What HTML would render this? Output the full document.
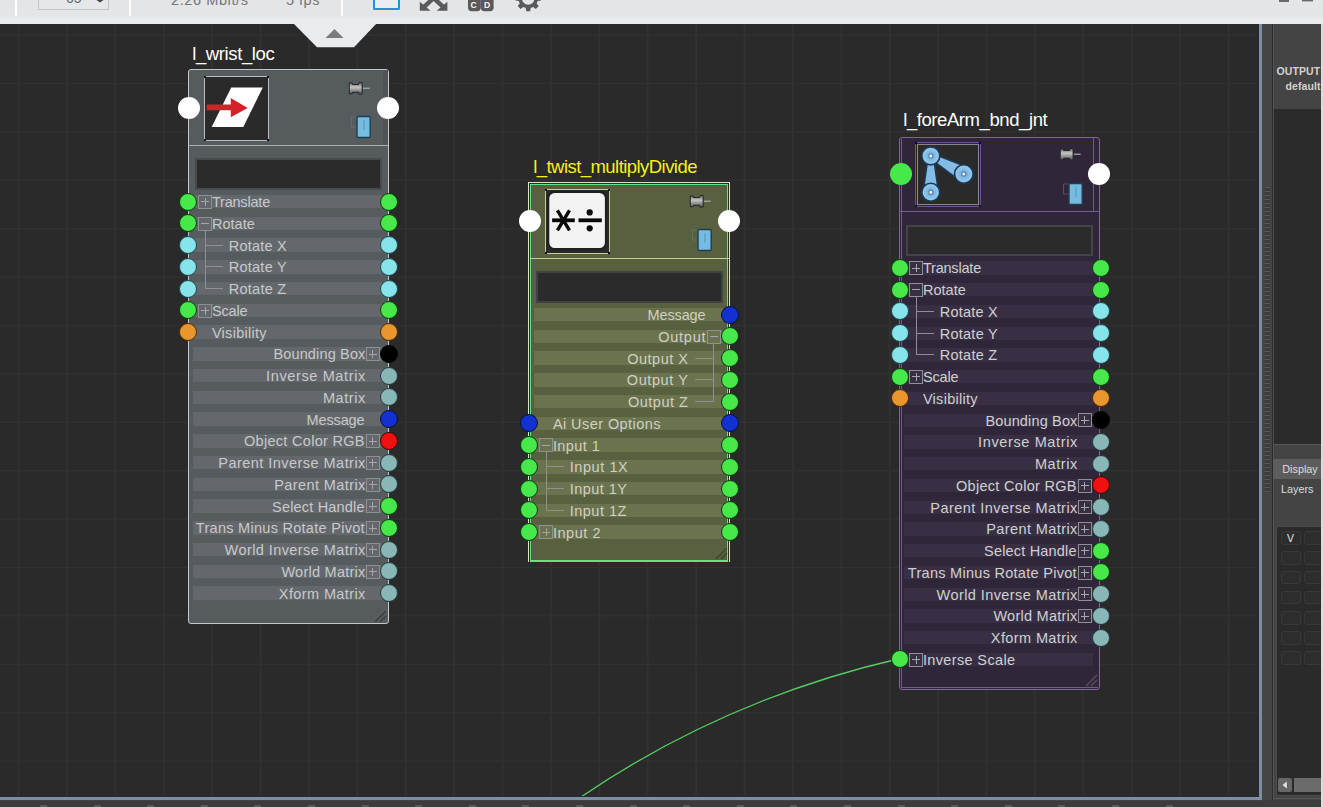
<!DOCTYPE html>
<html><head><meta charset="utf-8"><title>Node Editor</title>
<style>
*{box-sizing:border-box;margin:0;padding:0}
html,body{width:1323px;height:807px;overflow:hidden;background:#2a2a2a}
body{position:relative;font-family:"Liberation Sans", sans-serif;font-size:14.5px;color:#cfcfcf}
.abs{position:absolute}
#canvas{position:absolute;left:0;top:24px;width:1260px;height:774px;background-color:#2a2a2a;overflow:hidden}
#grid{position:absolute;left:0;top:0;width:1260px;height:774px}
.node{position:absolute;width:201px}
.title{position:absolute;white-space:nowrap;font-size:18.5px;line-height:22px}
.strip{position:absolute;height:13.4px}
.lbl{position:absolute;white-space:nowrap;line-height:16px;height:16px}
.port{position:absolute;width:18px;height:18px;border-radius:50%}
.bigport{position:absolute;width:22px;height:22px;border-radius:50%}
.exp{position:absolute;width:14px;height:14px;border:1px solid #8d9193}
.exp:before{content:"";position:absolute;left:2px;right:2px;top:5.5px;height:1px;background:#a4a7a9}
.exp.plus:after{content:"";position:absolute;top:2px;bottom:2px;left:5.5px;width:1px;background:#a4a7a9}
.ln{position:absolute;background:#8d9193}
</style></head>
<body>
<div id="canvas">
<svg id="grid" width="1260" height="774" viewBox="0 0 1260 774"><g fill="#313131"><rect x="17.5" y="0" width="2" height="774"/><rect x="65.9" y="0" width="2" height="774"/><rect x="114.3" y="0" width="2" height="774"/><rect x="162.7" y="0" width="2" height="774"/><rect x="211.1" y="0" width="2" height="774"/><rect x="259.5" y="0" width="2" height="774"/><rect x="307.9" y="0" width="2" height="774"/><rect x="356.3" y="0" width="2" height="774"/><rect x="404.7" y="0" width="2" height="774"/><rect x="453.1" y="0" width="2" height="774"/><rect x="501.5" y="0" width="2" height="774"/><rect x="549.9" y="0" width="2" height="774"/><rect x="598.3" y="0" width="2" height="774"/><rect x="646.7" y="0" width="2" height="774"/><rect x="695.1" y="0" width="2" height="774"/><rect x="743.5" y="0" width="2" height="774"/><rect x="791.9" y="0" width="2" height="774"/><rect x="840.3" y="0" width="2" height="774"/><rect x="888.7" y="0" width="2" height="774"/><rect x="937.1" y="0" width="2" height="774"/><rect x="985.5" y="0" width="2" height="774"/><rect x="1033.9" y="0" width="2" height="774"/><rect x="1082.3" y="0" width="2" height="774"/><rect x="1130.7" y="0" width="2" height="774"/><rect x="1179.1" y="0" width="2" height="774"/><rect x="1227.5" y="0" width="2" height="774"/><rect x="0" y="10.4" width="1260" height="1.4"/><rect x="0" y="58.8" width="1260" height="1.4"/><rect x="0" y="107.2" width="1260" height="1.4"/><rect x="0" y="155.6" width="1260" height="1.4"/><rect x="0" y="204.0" width="1260" height="1.4"/><rect x="0" y="252.4" width="1260" height="1.4"/><rect x="0" y="300.8" width="1260" height="1.4"/><rect x="0" y="349.2" width="1260" height="1.4"/><rect x="0" y="397.6" width="1260" height="1.4"/><rect x="0" y="446.0" width="1260" height="1.4"/><rect x="0" y="494.4" width="1260" height="1.4"/><rect x="0" y="542.8" width="1260" height="1.4"/><rect x="0" y="591.2" width="1260" height="1.4"/><rect x="0" y="639.6" width="1260" height="1.4"/><rect x="0" y="688.0" width="1260" height="1.4"/><rect x="0" y="736.4" width="1260" height="1.4"/></g></svg>
<svg class="abs" style="left:0;top:0" width="1260" height="774" viewBox="0 0 1260 774"><path d="M898 635 C 790 660, 680 705, 578 775" fill="none" stroke="#55d060" stroke-width="1.3"/></svg>
<div class="title" style="left:192.2px;top:18.7px;color:#ffffff;letter-spacing:-0.38px">l_wrist_loc</div>
<div class="node" id="n1" style="left:188px;top:45.0px;height:10px">
<div class="abs" style="left:0;top:0;width:201px;height:555px;background:#565b5e;border:1px solid #c4c7c9;border-radius:3px"></div><div class="abs" style="left:195px;top:1px;width:4.5px;height:75px;background:#4f5457"></div><svg class="abs" style="left:186px;top:541.0px" width="13" height="13" viewBox="0 0 13 13"><path d="M1 12 L12 1 M6 12 L12 6" stroke="#3a3d3f" stroke-width="1.4" fill="none"/></svg>
<div class="abs" style="left:1px;width:199px;top:76px;height:1px;background:#a9adaf"></div>
<svg class="abs" style="left:16px;top:7px" width="65" height="65" viewBox="0 0 65 65">
<rect x="0.5" y="0.5" width="64" height="64" fill="#2a2a2a" stroke="#b9bcbe" stroke-width="1"/>
<rect x="0" y="0" width="2" height="2" fill="#0c0c0c"/><rect x="63" y="0" width="2" height="2" fill="#0c0c0c"/><rect x="0" y="63" width="2" height="2" fill="#0c0c0c"/><rect x="63" y="63" width="2" height="2" fill="#0c0c0c"/>
<path d="M27.2 11.4 L58.8 11.4 L39.3 50.9 L7.7 50.9 Z" fill="#ffffff"/>
<path d="M2.6 28.6 H26.8 V22.1 L43.6 31.9 L26.8 41.2 V34.3 H2.6 Z" fill="#d6202a"/></svg>
<svg class="abs" style="left:160px;top:11.5px" width="24" height="15" viewBox="0 0 24 15">
<defs><linearGradient id="pg" x1="0" y1="0" x2="0" y2="1"><stop offset="0" stop-color="#6c6c6c"/><stop offset="0.4" stop-color="#c4c4c4"/><stop offset="1" stop-color="#5c5c5c"/></linearGradient></defs>
<path d="M1.8 2.4 H3.6 L4.6 4 H10.8 L11.6 2 H13.6 V12.6 H11.6 L10.8 10.8 H4.6 L3.6 12.2 H1.8 Z" fill="url(#pg)" stroke="#232527" stroke-width="2" stroke-linejoin="round" paint-order="stroke"/>
<rect x="14.9" y="6.6" width="6.8" height="1.3" fill="#a4a7a9"/></svg>
<svg class="abs" style="left:159px;top:45px" width="28" height="26" viewBox="0 0 28 26">
<path d="M4.5 3 H10 M4.5 3 V13 H10" stroke="#73797c" stroke-opacity="0.55" stroke-width="1" fill="none"/><rect x="10" y="2.5" width="13.2" height="21" rx="1.3" fill="#76bbe0" stroke="#1f3d50" stroke-width="1.4"/><path d="M17 6 V16" stroke="#5a9cc4" stroke-width="1.2"/></svg>
<div class="abs" style="left:7px;top:89.4px;width:187px;height:31.4px;background:#2b2b2b;border:2.6px solid #484b4e"></div>
<div class="strip" style="left:4.5px;width:189px;top:125.9px;background:#64686c"></div>
<div class="exp plus" style="left:10px;top:125.8px"></div>
<div class="lbl" style="top:125.1px;color:#c8c9ca;letter-spacing:-0.20px;left:23.9px">Translate</div>
<div class="port" style="left:-8.7px;top:123.6px;background:#46e84a;border:1.3px solid #0b3d0d"></div>
<div class="port" style="left:191.8px;top:123.6px;background:#46e84a;border:1.3px solid #0b3d0d"></div>
<div class="strip" style="left:4.5px;width:189px;top:147.7px;background:#64686c"></div>
<div class="exp " style="left:10px;top:147.5px"></div>
<div class="lbl" style="top:146.8px;color:#c8c9ca;letter-spacing:0.05px;left:23.9px">Rotate</div>
<div class="port" style="left:-8.7px;top:145.3px;background:#46e84a;border:1.3px solid #0b3d0d"></div>
<div class="port" style="left:191.8px;top:145.3px;background:#46e84a;border:1.3px solid #0b3d0d"></div>
<div class="strip" style="left:4.5px;width:189px;top:169.4px;background:#64686c"></div>
<div class="lbl" style="top:168.6px;color:#c8c9ca;letter-spacing:0.23px;left:40.7px">Rotate X</div>
<div class="ln" style="left:17px;top:175.6px;width:18px;height:1px"></div>
<div class="port" style="left:-8.7px;top:167.1px;background:#86e4ea;border:1.3px solid #1d4a4d"></div>
<div class="port" style="left:191.8px;top:167.1px;background:#86e4ea;border:1.3px solid #1d4a4d"></div>
<div class="strip" style="left:4.5px;width:189px;top:191.2px;background:#64686c"></div>
<div class="lbl" style="top:190.3px;color:#c8c9ca;letter-spacing:0.26px;left:40.7px">Rotate Y</div>
<div class="ln" style="left:17px;top:197.3px;width:18px;height:1px"></div>
<div class="port" style="left:-8.7px;top:188.8px;background:#86e4ea;border:1.3px solid #1d4a4d"></div>
<div class="port" style="left:191.8px;top:188.8px;background:#86e4ea;border:1.3px solid #1d4a4d"></div>
<div class="strip" style="left:4.5px;width:189px;top:212.9px;background:#64686c"></div>
<div class="lbl" style="top:212.1px;color:#c8c9ca;letter-spacing:0.27px;left:40.7px">Rotate Z</div>
<div class="ln" style="left:17px;top:219.1px;width:18px;height:1px"></div>
<div class="port" style="left:-8.7px;top:210.6px;background:#86e4ea;border:1.3px solid #1d4a4d"></div>
<div class="port" style="left:191.8px;top:210.6px;background:#86e4ea;border:1.3px solid #1d4a4d"></div>
<div class="strip" style="left:4.5px;width:189px;top:234.7px;background:#64686c"></div>
<div class="exp plus" style="left:10px;top:234.5px"></div>
<div class="lbl" style="top:233.8px;color:#c8c9ca;letter-spacing:-0.15px;left:23.9px">Scale</div>
<div class="port" style="left:-8.7px;top:232.3px;background:#46e84a;border:1.3px solid #0b3d0d"></div>
<div class="port" style="left:191.8px;top:232.3px;background:#46e84a;border:1.3px solid #0b3d0d"></div>
<div class="strip" style="left:4.5px;width:189px;top:256.4px;background:#64686c"></div>
<div class="lbl" style="top:255.6px;color:#c8c9ca;letter-spacing:0.29px;left:23.9px">Visibility</div>
<div class="port" style="left:-8.7px;top:254.1px;background:#ea962e;border:1.3px solid #4a2c08"></div>
<div class="port" style="left:191.8px;top:254.1px;background:#ea962e;border:1.3px solid #4a2c08"></div>
<div class="strip" style="left:4.5px;width:189px;top:278.2px;background:#64686c"></div>
<div class="lbl" style="top:277.4px;color:#c8c9ca;letter-spacing:0.15px;right:23.5px">Bounding Box</div>
<div class="exp plus" style="left:177.5px;top:278.1px"></div>
<div class="port" style="left:191.8px;top:275.9px;background:#000000;border:1.3px solid #000000"></div>
<div class="strip" style="left:4.5px;width:189px;top:299.9px;background:#64686c"></div>
<div class="lbl" style="top:299.1px;color:#c8c9ca;letter-spacing:0.63px;right:23.1px">Inverse Matrix</div>
<div class="port" style="left:191.8px;top:297.6px;background:#89b7b8;border:1.3px solid #243b3c"></div>
<div class="strip" style="left:4.5px;width:189px;top:321.7px;background:#64686c"></div>
<div class="lbl" style="top:320.9px;color:#c8c9ca;letter-spacing:0.58px;right:23.1px">Matrix</div>
<div class="port" style="left:191.8px;top:319.4px;background:#89b7b8;border:1.3px solid #243b3c"></div>
<div class="strip" style="left:4.5px;width:189px;top:343.4px;background:#64686c"></div>
<div class="lbl" style="top:342.6px;color:#c8c9ca;letter-spacing:-0.14px;right:24.6px">Message</div>
<div class="port" style="left:191.8px;top:341.1px;background:#1330d0;border:1.3px solid #06103f"></div>
<div class="strip" style="left:4.5px;width:189px;top:365.2px;background:#64686c"></div>
<div class="lbl" style="top:364.4px;color:#c8c9ca;letter-spacing:0.30px;right:24.2px">Object Color RGB</div>
<div class="exp plus" style="left:177.5px;top:365.1px"></div>
<div class="port" style="left:191.8px;top:362.9px;background:#f01010;border:1.3px solid #400404"></div>
<div class="strip" style="left:4.5px;width:189px;top:386.9px;background:#64686c"></div>
<div class="lbl" style="top:386.1px;color:#c8c9ca;letter-spacing:0.46px;right:23.2px">Parent Inverse Matrix</div>
<div class="exp plus" style="left:177.5px;top:386.8px"></div>
<div class="port" style="left:191.8px;top:384.6px;background:#89b7b8;border:1.3px solid #243b3c"></div>
<div class="strip" style="left:4.5px;width:189px;top:408.7px;background:#64686c"></div>
<div class="lbl" style="top:407.9px;color:#c8c9ca;letter-spacing:0.40px;right:23.3px">Parent Matrix</div>
<div class="exp plus" style="left:177.5px;top:408.6px"></div>
<div class="port" style="left:191.8px;top:406.4px;background:#89b7b8;border:1.3px solid #243b3c"></div>
<div class="strip" style="left:4.5px;width:189px;top:430.4px;background:#64686c"></div>
<div class="lbl" style="top:429.6px;color:#c8c9ca;letter-spacing:0.18px;right:24.3px">Select Handle</div>
<div class="exp plus" style="left:177.5px;top:430.3px"></div>
<div class="port" style="left:191.8px;top:428.1px;background:#46e84a;border:1.3px solid #0b3d0d"></div>
<div class="strip" style="left:4.5px;width:189px;top:452.2px;background:#64686c"></div>
<div class="lbl" style="top:451.4px;color:#c8c9ca;letter-spacing:0.28px;right:24.2px">Trans Minus Rotate Pivot</div>
<div class="exp plus" style="left:177.5px;top:452.1px"></div>
<div class="port" style="left:191.8px;top:449.9px;background:#46e84a;border:1.3px solid #0b3d0d"></div>
<div class="strip" style="left:4.5px;width:189px;top:473.9px;background:#64686c"></div>
<div class="lbl" style="top:473.1px;color:#c8c9ca;letter-spacing:0.42px;right:23.3px">World Inverse Matrix</div>
<div class="exp plus" style="left:177.5px;top:473.8px"></div>
<div class="port" style="left:191.8px;top:471.6px;background:#89b7b8;border:1.3px solid #243b3c"></div>
<div class="strip" style="left:4.5px;width:189px;top:495.7px;background:#64686c"></div>
<div class="lbl" style="top:494.9px;color:#c8c9ca;letter-spacing:0.26px;right:23.4px">World Matrix</div>
<div class="exp plus" style="left:177.5px;top:495.6px"></div>
<div class="port" style="left:191.8px;top:493.4px;background:#89b7b8;border:1.3px solid #243b3c"></div>
<div class="strip" style="left:4.5px;width:189px;top:517.4px;background:#64686c"></div>
<div class="lbl" style="top:516.6px;color:#c8c9ca;letter-spacing:0.39px;right:23.3px">Xform Matrix</div>
<div class="port" style="left:191.8px;top:515.1px;background:#89b7b8;border:1.3px solid #243b3c"></div>
<div class="ln" style="left:17.0px;top:161.3px;width:1px;height:58.8px"></div>
<div class="bigport" style="left:-9.7px;top:28.3px;background:#ffffff"></div>
<div class="bigport" style="left:188.8px;top:28.3px;background:#ffffff"></div>
</div>
<div class="title" style="left:533.2px;top:131.7px;color:#f4f01a;letter-spacing:-0.55px">l_twist_multiplyDivide</div>
<div class="node" id="n2" style="left:529px;top:158.0px;height:10px">
<div class="abs" style="left:-1px;top:0;width:202px;height:380px;background:#2a2a2a;border:1px solid #dfe6bd;border-bottom:none"></div><div class="abs" style="left:1.3px;top:2.3px;width:197.7px;height:377.7px;background:#58613f;border:1.7px solid #5fe487;border-bottom-width:2.2px;border-top-width:1.4px"></div><svg class="abs" style="left:186px;top:365.0px" width="13" height="13" viewBox="0 0 13 13"><path d="M1 12 L12 1 M6 12 L12 6" stroke="#3f432f" stroke-width="1.4" fill="none"/></svg>
<div class="abs" style="left:1px;width:199px;top:76px;height:1px;background:#c9cf86"></div>
<svg class="abs" style="left:16px;top:7px" width="65" height="65" viewBox="0 0 65 65">
<rect x="0.5" y="0.5" width="64" height="64" fill="#2a2a2a" stroke="#c9cf9a" stroke-width="1"/>
<rect x="0" y="0" width="2" height="2" fill="#0c0c0c"/><rect x="63" y="0" width="2" height="2" fill="#0c0c0c"/><rect x="0" y="63" width="2" height="2" fill="#0c0c0c"/><rect x="63" y="63" width="2" height="2" fill="#0c0c0c"/>
<rect x="3.2" y="2.8" width="57.8" height="57.4" rx="6.5" fill="#f3f3f3" stroke="#1e2023" stroke-width="2.2"/>
<g stroke="#080808" stroke-linecap="butt" fill="none"><path d="M7.1 31.3 H29.8" stroke-width="3.8"/><path d="M12.4 21.3 L24.5 41.3 M24.5 21.3 L12.4 41.3" stroke-width="3.4"/></g>
<rect x="33.5" y="29.4" width="23.3" height="3.8" fill="#080808"/><circle cx="44.7" cy="23.4" r="3.1" fill="#080808"/><circle cx="44.7" cy="39.3" r="3.1" fill="#080808"/></svg>
<svg class="abs" style="left:160px;top:11.5px" width="24" height="15" viewBox="0 0 24 15">
<defs><linearGradient id="pg" x1="0" y1="0" x2="0" y2="1"><stop offset="0" stop-color="#6c6c6c"/><stop offset="0.4" stop-color="#c4c4c4"/><stop offset="1" stop-color="#5c5c5c"/></linearGradient></defs>
<path d="M1.8 2.4 H3.6 L4.6 4 H10.8 L11.6 2 H13.6 V12.6 H11.6 L10.8 10.8 H4.6 L3.6 12.2 H1.8 Z" fill="url(#pg)" stroke="#232527" stroke-width="2" stroke-linejoin="round" paint-order="stroke"/>
<rect x="14.9" y="6.6" width="6.8" height="1.3" fill="#a4a7a9"/></svg>
<svg class="abs" style="left:159px;top:45px" width="28" height="26" viewBox="0 0 28 26">
<path d="M4.5 3 H10 M4.5 3 V13 H10" stroke="#73797c" stroke-opacity="0.55" stroke-width="1" fill="none"/><rect x="10" y="2.5" width="13.2" height="21" rx="1.3" fill="#76bbe0" stroke="#1f3d50" stroke-width="1.4"/><path d="M17 6 V16" stroke="#5a9cc4" stroke-width="1.2"/></svg>
<div class="abs" style="left:7px;top:89.4px;width:187px;height:31.4px;background:#2b2b2b;border:2.6px solid #414342"></div>
<div class="strip" style="left:4.5px;width:189px;top:125.9px;background:#6a734e"></div>
<div class="lbl" style="top:125.1px;color:#cfd0c2;letter-spacing:-0.14px;right:24.6px">Message</div>
<div class="port" style="left:191.8px;top:123.6px;background:#1330d0;border:1.3px solid #06103f"></div>
<div class="strip" style="left:4.5px;width:189px;top:147.7px;background:#6a734e"></div>
<div class="lbl" style="top:146.8px;color:#cfd0c2;letter-spacing:0.77px;right:23.7px">Output</div>
<div class="exp " style="left:177.5px;top:147.5px"></div>
<div class="port" style="left:191.8px;top:145.3px;background:#46e84a;border:1.3px solid #0b3d0d"></div>
<div class="strip" style="left:4.5px;width:189px;top:169.4px;background:#6a734e"></div>
<div class="lbl" style="top:168.6px;color:#cfd0c2;letter-spacing:0.47px;right:41.7px">Output X</div>
<div class="ln" style="left:166px;top:175.6px;width:18.5px;height:1px"></div>
<div class="port" style="left:191.8px;top:167.1px;background:#46e84a;border:1.3px solid #0b3d0d"></div>
<div class="strip" style="left:4.5px;width:189px;top:191.2px;background:#6a734e"></div>
<div class="lbl" style="top:190.3px;color:#cfd0c2;letter-spacing:0.58px;right:41.6px">Output Y</div>
<div class="ln" style="left:166px;top:197.3px;width:18.5px;height:1px"></div>
<div class="port" style="left:191.8px;top:188.8px;background:#46e84a;border:1.3px solid #0b3d0d"></div>
<div class="strip" style="left:4.5px;width:189px;top:212.9px;background:#6a734e"></div>
<div class="lbl" style="top:212.1px;color:#cfd0c2;letter-spacing:0.48px;right:41.7px">Output Z</div>
<div class="ln" style="left:166px;top:219.1px;width:18.5px;height:1px"></div>
<div class="port" style="left:191.8px;top:210.6px;background:#46e84a;border:1.3px solid #0b3d0d"></div>
<div class="strip" style="left:4.5px;width:189px;top:234.7px;background:#6a734e"></div>
<div class="lbl" style="top:233.8px;color:#cfd0c2;letter-spacing:0.43px;left:23.9px">Ai User Options</div>
<div class="port" style="left:-8.7px;top:232.3px;background:#1330d0;border:1.3px solid #06103f"></div>
<div class="port" style="left:191.8px;top:232.3px;background:#1330d0;border:1.3px solid #06103f"></div>
<div class="strip" style="left:4.5px;width:189px;top:256.4px;background:#6a734e"></div>
<div class="exp " style="left:10px;top:256.3px"></div>
<div class="lbl" style="top:255.6px;color:#cfd0c2;letter-spacing:0.43px;left:23.9px">Input 1</div>
<div class="port" style="left:-8.7px;top:254.1px;background:#46e84a;border:1.3px solid #0b3d0d"></div>
<div class="port" style="left:191.8px;top:254.1px;background:#46e84a;border:1.3px solid #0b3d0d"></div>
<div class="strip" style="left:4.5px;width:189px;top:278.2px;background:#6a734e"></div>
<div class="lbl" style="top:277.4px;color:#cfd0c2;letter-spacing:0.57px;left:40.7px">Input 1X</div>
<div class="ln" style="left:17px;top:284.4px;width:18px;height:1px"></div>
<div class="port" style="left:-8.7px;top:275.9px;background:#46e84a;border:1.3px solid #0b3d0d"></div>
<div class="port" style="left:191.8px;top:275.9px;background:#46e84a;border:1.3px solid #0b3d0d"></div>
<div class="strip" style="left:4.5px;width:189px;top:299.9px;background:#6a734e"></div>
<div class="lbl" style="top:299.1px;color:#cfd0c2;letter-spacing:0.47px;left:40.7px">Input 1Y</div>
<div class="ln" style="left:17px;top:306.1px;width:18px;height:1px"></div>
<div class="port" style="left:-8.7px;top:297.6px;background:#46e84a;border:1.3px solid #0b3d0d"></div>
<div class="port" style="left:191.8px;top:297.6px;background:#46e84a;border:1.3px solid #0b3d0d"></div>
<div class="strip" style="left:4.5px;width:189px;top:321.7px;background:#6a734e"></div>
<div class="lbl" style="top:320.9px;color:#cfd0c2;letter-spacing:0.51px;left:40.7px">Input 1Z</div>
<div class="ln" style="left:17px;top:327.9px;width:18px;height:1px"></div>
<div class="port" style="left:-8.7px;top:319.4px;background:#46e84a;border:1.3px solid #0b3d0d"></div>
<div class="port" style="left:191.8px;top:319.4px;background:#46e84a;border:1.3px solid #0b3d0d"></div>
<div class="strip" style="left:4.5px;width:189px;top:343.4px;background:#6a734e"></div>
<div class="exp plus" style="left:10px;top:343.3px"></div>
<div class="lbl" style="top:342.6px;color:#cfd0c2;letter-spacing:0.54px;left:23.9px">Input 2</div>
<div class="port" style="left:-8.7px;top:341.1px;background:#46e84a;border:1.3px solid #0b3d0d"></div>
<div class="port" style="left:191.8px;top:341.1px;background:#46e84a;border:1.3px solid #0b3d0d"></div>
<div class="ln" style="left:184.0px;top:161.3px;width:1px;height:58.8px"></div>
<div class="ln" style="left:17.0px;top:270.1px;width:1px;height:58.8px"></div>
<div class="bigport" style="left:-9.7px;top:27.7px;background:#ffffff"></div>
<div class="bigport" style="left:188.8px;top:27.7px;background:#ffffff"></div>
</div>
<div class="title" style="left:903.2px;top:85.1px;color:#ffffff;letter-spacing:-0.42px">l_foreArm_bnd_jnt</div>
<div class="node" id="n3" style="left:899px;top:111.4px;height:10px">
<div class="abs" style="left:0;top:2px;width:201px;height:553px;background:#2f2639;border:1.5px solid #8163a0;border-radius:3px"></div><div class="abs" style="left:2px;top:4px;width:197px;height:549px;border:1px solid #6e6278;border-right:none;border-top:none"></div><div class="abs" style="left:194px;top:3px;width:1px;height:73px;background:#6a5f73"></div><svg class="abs" style="left:186px;top:539.0px" width="13" height="13" viewBox="0 0 13 13"><path d="M1 12 L12 1 M6 12 L12 6" stroke="#5b5060" stroke-width="1.4" fill="none"/></svg>
<div class="abs" style="left:1px;width:199px;top:76px;height:1px;background:#7a5a96"></div>
<svg class="abs" style="left:16px;top:7px" width="66" height="65" viewBox="0 0 66 65">
<rect x="0.5" y="0.5" width="65" height="64" fill="#2a2a2a" stroke="#6f4f8f" stroke-width="1"/>
<rect x="2.5" y="2.5" width="61" height="60" fill="none" stroke="#8a838d" stroke-width="1"/>
<rect x="0" y="0" width="2" height="2" fill="#0c0c14"/><rect x="64" y="0" width="2" height="2" fill="#0c0c14"/><rect x="0" y="63" width="2" height="2" fill="#0c0c14"/><rect x="64" y="63" width="2" height="2" fill="#0c0c14"/>
<defs><radialGradient id="jg" cx="0.5" cy="0.5" r="0.5"><stop offset="0" stop-color="#6fa9d8"/><stop offset="0.45" stop-color="#7fb8e3"/><stop offset="0.8" stop-color="#93c8ee"/><stop offset="1" stop-color="#7db4df"/></radialGradient></defs>
<g stroke="#1d3a55" stroke-width="1.6" stroke-linejoin="round">
<path d="M12.2 20.9 L9.0 43.9 L22.6 43.9 L19.4 20.9 Z" fill="#84bce6"/><path d="M20.2 20.4 L39.7 34.8 L46.3 22.8 L23.7 14.1 Z" fill="#84bce6"/>
<circle cx="15.8" cy="13.9" r="9.0" fill="url(#jg)"/><circle cx="48.8" cy="32.0" r="9.3" fill="url(#jg)"/><circle cx="15.8" cy="50.3" r="9.0" fill="url(#jg)"/>
</g>
<g fill="#f0f2f5" stroke="#5585b0" stroke-width="1.2"><circle cx="15.8" cy="13.9" r="2.1"/><circle cx="48.8" cy="32.0" r="2.1"/><circle cx="15.8" cy="50.3" r="2.1"/></g>
</svg>
<svg class="abs" style="left:160px;top:11.5px" width="24" height="15" viewBox="0 0 24 15">
<defs><linearGradient id="pg" x1="0" y1="0" x2="0" y2="1"><stop offset="0" stop-color="#6c6c6c"/><stop offset="0.4" stop-color="#c4c4c4"/><stop offset="1" stop-color="#5c5c5c"/></linearGradient></defs>
<path d="M1.8 2.4 H3.6 L4.6 4 H10.8 L11.6 2 H13.6 V12.6 H11.6 L10.8 10.8 H4.6 L3.6 12.2 H1.8 Z" fill="url(#pg)" stroke="#232527" stroke-width="2" stroke-linejoin="round" paint-order="stroke"/>
<rect x="14.9" y="6.6" width="6.8" height="1.3" fill="#a4a7a9"/></svg>
<svg class="abs" style="left:160.2px;top:45.8px" width="28" height="26" viewBox="0 0 28 26">
<path d="M4.5 3 H10 M4.5 3 V13 H10" stroke="#73797c" stroke-opacity="0.55" stroke-width="1" fill="none"/><rect x="10" y="2.5" width="13.2" height="21" rx="1.3" fill="#76bbe0" stroke="#1f3d50" stroke-width="1.4"/><path d="M17 6 V16" stroke="#5a9cc4" stroke-width="1.2"/></svg>
<div class="abs" style="left:7px;top:89.4px;width:187px;height:31.4px;background:#2b2b2b;border:2.6px solid #45424a"></div>
<div class="strip" style="left:4.5px;width:189px;top:125.9px;background:#392f44"></div>
<div class="exp plus" style="left:10px;top:125.8px"></div>
<div class="lbl" style="top:125.1px;color:#cfcfd0;letter-spacing:-0.20px;left:23.9px">Translate</div>
<div class="port" style="left:-8.0px;top:123.6px;background:#46e84a;border:1.3px solid #0b3d0d"></div>
<div class="port" style="left:192.5px;top:123.6px;background:#46e84a;border:1.3px solid #0b3d0d"></div>
<div class="strip" style="left:4.5px;width:189px;top:147.7px;background:#392f44"></div>
<div class="exp " style="left:10px;top:147.5px"></div>
<div class="lbl" style="top:146.8px;color:#cfcfd0;letter-spacing:0.05px;left:23.9px">Rotate</div>
<div class="port" style="left:-8.0px;top:145.3px;background:#46e84a;border:1.3px solid #0b3d0d"></div>
<div class="port" style="left:192.5px;top:145.3px;background:#46e84a;border:1.3px solid #0b3d0d"></div>
<div class="strip" style="left:4.5px;width:189px;top:169.4px;background:#392f44"></div>
<div class="lbl" style="top:168.6px;color:#cfcfd0;letter-spacing:0.23px;left:40.7px">Rotate X</div>
<div class="ln" style="left:17px;top:175.6px;width:18px;height:1px"></div>
<div class="port" style="left:-8.0px;top:167.1px;background:#86e4ea;border:1.3px solid #1d4a4d"></div>
<div class="port" style="left:192.5px;top:167.1px;background:#86e4ea;border:1.3px solid #1d4a4d"></div>
<div class="strip" style="left:4.5px;width:189px;top:191.2px;background:#392f44"></div>
<div class="lbl" style="top:190.3px;color:#cfcfd0;letter-spacing:0.26px;left:40.7px">Rotate Y</div>
<div class="ln" style="left:17px;top:197.3px;width:18px;height:1px"></div>
<div class="port" style="left:-8.0px;top:188.8px;background:#86e4ea;border:1.3px solid #1d4a4d"></div>
<div class="port" style="left:192.5px;top:188.8px;background:#86e4ea;border:1.3px solid #1d4a4d"></div>
<div class="strip" style="left:4.5px;width:189px;top:212.9px;background:#392f44"></div>
<div class="lbl" style="top:212.1px;color:#cfcfd0;letter-spacing:0.27px;left:40.7px">Rotate Z</div>
<div class="ln" style="left:17px;top:219.1px;width:18px;height:1px"></div>
<div class="port" style="left:-8.0px;top:210.6px;background:#86e4ea;border:1.3px solid #1d4a4d"></div>
<div class="port" style="left:192.5px;top:210.6px;background:#86e4ea;border:1.3px solid #1d4a4d"></div>
<div class="strip" style="left:4.5px;width:189px;top:234.7px;background:#392f44"></div>
<div class="exp plus" style="left:10px;top:234.5px"></div>
<div class="lbl" style="top:233.8px;color:#cfcfd0;letter-spacing:-0.15px;left:23.9px">Scale</div>
<div class="port" style="left:-8.0px;top:232.3px;background:#46e84a;border:1.3px solid #0b3d0d"></div>
<div class="port" style="left:192.5px;top:232.3px;background:#46e84a;border:1.3px solid #0b3d0d"></div>
<div class="strip" style="left:4.5px;width:189px;top:256.4px;background:#392f44"></div>
<div class="lbl" style="top:255.6px;color:#cfcfd0;letter-spacing:0.29px;left:23.9px">Visibility</div>
<div class="port" style="left:-8.0px;top:254.1px;background:#ea962e;border:1.3px solid #4a2c08"></div>
<div class="port" style="left:192.5px;top:254.1px;background:#ea962e;border:1.3px solid #4a2c08"></div>
<div class="strip" style="left:4.5px;width:189px;top:278.2px;background:#392f44"></div>
<div class="lbl" style="top:277.4px;color:#cfcfd0;letter-spacing:0.15px;right:22.5px">Bounding Box</div>
<div class="exp plus" style="left:178.5px;top:278.1px"></div>
<div class="port" style="left:192.5px;top:275.9px;background:#000000;border:1.3px solid #000000"></div>
<div class="strip" style="left:4.5px;width:189px;top:299.9px;background:#392f44"></div>
<div class="lbl" style="top:299.1px;color:#cfcfd0;letter-spacing:0.63px;right:22.1px">Inverse Matrix</div>
<div class="port" style="left:192.5px;top:297.6px;background:#89b7b8;border:1.3px solid #243b3c"></div>
<div class="strip" style="left:4.5px;width:189px;top:321.7px;background:#392f44"></div>
<div class="lbl" style="top:320.9px;color:#cfcfd0;letter-spacing:0.58px;right:22.1px">Matrix</div>
<div class="port" style="left:192.5px;top:319.4px;background:#89b7b8;border:1.3px solid #243b3c"></div>
<div class="strip" style="left:4.5px;width:189px;top:343.4px;background:#392f44"></div>
<div class="lbl" style="top:342.6px;color:#cfcfd0;letter-spacing:0.30px;right:23.2px">Object Color RGB</div>
<div class="exp plus" style="left:178.5px;top:343.3px"></div>
<div class="port" style="left:192.5px;top:341.1px;background:#f01010;border:1.3px solid #400404"></div>
<div class="strip" style="left:4.5px;width:189px;top:365.2px;background:#392f44"></div>
<div class="lbl" style="top:364.4px;color:#cfcfd0;letter-spacing:0.46px;right:22.2px">Parent Inverse Matrix</div>
<div class="exp plus" style="left:178.5px;top:365.1px"></div>
<div class="port" style="left:192.5px;top:362.9px;background:#89b7b8;border:1.3px solid #243b3c"></div>
<div class="strip" style="left:4.5px;width:189px;top:386.9px;background:#392f44"></div>
<div class="lbl" style="top:386.1px;color:#cfcfd0;letter-spacing:0.40px;right:22.3px">Parent Matrix</div>
<div class="exp plus" style="left:178.5px;top:386.8px"></div>
<div class="port" style="left:192.5px;top:384.6px;background:#89b7b8;border:1.3px solid #243b3c"></div>
<div class="strip" style="left:4.5px;width:189px;top:408.7px;background:#392f44"></div>
<div class="lbl" style="top:407.9px;color:#cfcfd0;letter-spacing:0.18px;right:23.3px">Select Handle</div>
<div class="exp plus" style="left:178.5px;top:408.6px"></div>
<div class="port" style="left:192.5px;top:406.4px;background:#46e84a;border:1.3px solid #0b3d0d"></div>
<div class="strip" style="left:4.5px;width:189px;top:430.4px;background:#392f44"></div>
<div class="lbl" style="top:429.6px;color:#cfcfd0;letter-spacing:0.28px;right:23.2px">Trans Minus Rotate Pivot</div>
<div class="exp plus" style="left:178.5px;top:430.3px"></div>
<div class="port" style="left:192.5px;top:428.1px;background:#46e84a;border:1.3px solid #0b3d0d"></div>
<div class="strip" style="left:4.5px;width:189px;top:452.2px;background:#392f44"></div>
<div class="lbl" style="top:451.4px;color:#cfcfd0;letter-spacing:0.42px;right:22.3px">World Inverse Matrix</div>
<div class="exp plus" style="left:178.5px;top:452.1px"></div>
<div class="port" style="left:192.5px;top:449.9px;background:#89b7b8;border:1.3px solid #243b3c"></div>
<div class="strip" style="left:4.5px;width:189px;top:473.9px;background:#392f44"></div>
<div class="lbl" style="top:473.1px;color:#cfcfd0;letter-spacing:0.26px;right:22.4px">World Matrix</div>
<div class="exp plus" style="left:178.5px;top:473.8px"></div>
<div class="port" style="left:192.5px;top:471.6px;background:#89b7b8;border:1.3px solid #243b3c"></div>
<div class="strip" style="left:4.5px;width:189px;top:495.7px;background:#392f44"></div>
<div class="lbl" style="top:494.9px;color:#cfcfd0;letter-spacing:0.39px;right:22.3px">Xform Matrix</div>
<div class="port" style="left:192.5px;top:493.4px;background:#89b7b8;border:1.3px solid #243b3c"></div>
<div class="strip" style="left:4.5px;width:189px;top:517.4px;background:#392f44"></div>
<div class="exp plus" style="left:10px;top:517.3px"></div>
<div class="lbl" style="top:516.6px;color:#cfcfd0;letter-spacing:0.36px;left:23.9px">Inverse Scale</div>
<div class="port" style="left:-8.0px;top:515.1px;background:#46e84a;border:1.3px solid #0b3d0d"></div>
<div class="ln" style="left:17.0px;top:161.3px;width:1px;height:58.8px"></div>
<div class="bigport" style="left:-9.5px;top:27.5px;background:#46e84a"></div>
<div class="bigport" style="left:189.0px;top:27.5px;background:#ffffff"></div>
</div>
</div>
<div class="abs" style="left:0;top:795.5px;width:1259px;height:1.5px;background:#222b35"></div><div class="abs" style="left:1257.5px;top:24px;width:1.5px;height:773px;background:#222b35"></div>
<div class="abs" style="left:0;top:797px;width:1262px;height:3px;background:#7e8fa2"></div>
<div class="abs" style="left:1259px;top:24px;width:3px;height:776px;background:#7e8fa2"></div>
<div class="abs" style="left:0;top:800px;width:1262px;height:7px;background:#3b3b3b;border-top:1px solid #424242"></div>
<div class="abs" style="left:40.0px;top:805.4px;width:7px;height:1.6px;background:#7a7a7a;opacity:.5"></div><div class="abs" style="left:93.6px;top:805.4px;width:7px;height:1.6px;background:#7a7a7a;opacity:.5"></div><div class="abs" style="left:147.2px;top:805.4px;width:7px;height:1.6px;background:#7a7a7a;opacity:.5"></div><div class="abs" style="left:200.8px;top:805.4px;width:7px;height:1.6px;background:#7a7a7a;opacity:.5"></div><div class="abs" style="left:254.4px;top:805.4px;width:7px;height:1.6px;background:#7a7a7a;opacity:.5"></div><div class="abs" style="left:308.0px;top:805.4px;width:7px;height:1.6px;background:#7a7a7a;opacity:.5"></div><div class="abs" style="left:361.6px;top:805.4px;width:7px;height:1.6px;background:#7a7a7a;opacity:.5"></div><div class="abs" style="left:415.2px;top:805.4px;width:7px;height:1.6px;background:#7a7a7a;opacity:.5"></div><div class="abs" style="left:468.8px;top:805.4px;width:7px;height:1.6px;background:#7a7a7a;opacity:.5"></div><div class="abs" style="left:522.4px;top:805.4px;width:7px;height:1.6px;background:#7a7a7a;opacity:.5"></div><div class="abs" style="left:576.0px;top:805.4px;width:7px;height:1.6px;background:#7a7a7a;opacity:.5"></div><div class="abs" style="left:629.6px;top:805.4px;width:7px;height:1.6px;background:#7a7a7a;opacity:.5"></div><div class="abs" style="left:683.2px;top:805.4px;width:7px;height:1.6px;background:#7a7a7a;opacity:.5"></div><div class="abs" style="left:736.8px;top:805.4px;width:7px;height:1.6px;background:#7a7a7a;opacity:.5"></div><div class="abs" style="left:790.4px;top:805.4px;width:7px;height:1.6px;background:#7a7a7a;opacity:.5"></div><div class="abs" style="left:844.0px;top:805.4px;width:7px;height:1.6px;background:#7a7a7a;opacity:.5"></div><div class="abs" style="left:897.6px;top:805.4px;width:7px;height:1.6px;background:#7a7a7a;opacity:.5"></div><div class="abs" style="left:951.2px;top:805.4px;width:7px;height:1.6px;background:#7a7a7a;opacity:.5"></div><div class="abs" style="left:1004.8px;top:805.4px;width:7px;height:1.6px;background:#7a7a7a;opacity:.5"></div><div class="abs" style="left:1058.4px;top:805.4px;width:7px;height:1.6px;background:#7a7a7a;opacity:.5"></div><div class="abs" style="left:1112.0px;top:805.4px;width:7px;height:1.6px;background:#7a7a7a;opacity:.5"></div><div class="abs" style="left:1165.6px;top:805.4px;width:7px;height:1.6px;background:#7a7a7a;opacity:.5"></div>
<div class="abs" id="rp" style="left:1262px;top:24px;width:61px;height:783px;background:#444444;overflow:hidden;font-size:10.5px">
<div class="abs" style="left:0;top:0;width:10px;height:783px;background:#454545"></div>
<div class="abs" style="left:3px;top:163px;width:5px;height:306px;background:repeating-linear-gradient(#585858 0 1.5px,#3c3c3c 1.5px 4px)"></div>
<div class="abs" style="left:9.5px;top:0;width:1.5px;height:783px;background:#2c2c2c"></div>
<div class="abs" style="left:11px;top:0;width:1px;height:783px;background:#555"></div>
<div class="abs" style="left:12px;top:0;width:47px;height:85px;background:#444"></div>
<div class="abs" style="left:14.5px;top:39.5px;white-space:nowrap;font-weight:bold;color:#d4d2cf;font-size:10.5px;line-height:15px;letter-spacing:0.1px">OUTPUT<br><span style="padding-left:9px">default</span></div>
<div class="abs" style="left:11px;top:85px;width:50px;height:336px;background:#2b2b2b;border-left:1px solid #4e4e4e;border-bottom:1px solid #5a5a5a"></div>
<div class="abs" style="left:10.5px;top:435px;width:50px;height:20px;background:#5d5d5d"></div>
<div class="abs" style="left:20.3px;top:437.5px;color:#dedede;font-size:10.8px;line-height:15px;white-space:nowrap">Display</div>
<div class="abs" style="left:19px;top:457.5px;color:#dedede;font-size:10.8px;line-height:15px;white-space:nowrap">Layers</div>
<div class="abs" style="left:13.5px;top:501.5px;width:50px;height:270px;background:#2a2a2a;border:1px solid #4c4c4c;border-radius:3px"></div><div class="abs" style="left:11px;top:773.5px;width:50px;height:1px;background:#565656"></div><div class="abs" style="left:0;top:776px;width:61px;height:7px;background:#3d3d3d"></div>
<div class="abs" style="left:18.5px;top:507.0px;width:20.5px;height:13.5px;background:#2d2d2d;border:1px solid #393939;border-radius:3px"></div>
<div class="abs" style="left:42.0px;top:507.0px;width:20.5px;height:13.5px;background:#2d2d2d;border:1px solid #393939;border-radius:3px"></div>
<div class="abs" style="left:18.5px;top:527.0px;width:20.5px;height:13.5px;background:#2d2d2d;border:1px solid #393939;border-radius:3px"></div>
<div class="abs" style="left:42.0px;top:527.0px;width:20.5px;height:13.5px;background:#2d2d2d;border:1px solid #393939;border-radius:3px"></div>
<div class="abs" style="left:18.5px;top:546.8px;width:20.5px;height:13.5px;background:#2d2d2d;border:1px solid #393939;border-radius:3px"></div>
<div class="abs" style="left:42.0px;top:546.8px;width:20.5px;height:13.5px;background:#2d2d2d;border:1px solid #393939;border-radius:3px"></div>
<div class="abs" style="left:18.5px;top:566.7px;width:20.5px;height:13.5px;background:#2d2d2d;border:1px solid #393939;border-radius:3px"></div>
<div class="abs" style="left:42.0px;top:566.7px;width:20.5px;height:13.5px;background:#2d2d2d;border:1px solid #393939;border-radius:3px"></div>
<div class="abs" style="left:18.5px;top:587.3px;width:20.5px;height:13.5px;background:#2d2d2d;border:1px solid #393939;border-radius:3px"></div>
<div class="abs" style="left:42.0px;top:587.3px;width:20.5px;height:13.5px;background:#2d2d2d;border:1px solid #393939;border-radius:3px"></div>
<div class="abs" style="left:18.5px;top:607.0px;width:20.5px;height:13.5px;background:#2d2d2d;border:1px solid #393939;border-radius:3px"></div>
<div class="abs" style="left:42.0px;top:607.0px;width:20.5px;height:13.5px;background:#2d2d2d;border:1px solid #393939;border-radius:3px"></div>
<div class="abs" style="left:18.5px;top:627.0px;width:20.5px;height:13.5px;background:#2d2d2d;border:1px solid #393939;border-radius:3px"></div>
<div class="abs" style="left:42.0px;top:627.0px;width:20.5px;height:13.5px;background:#2d2d2d;border:1px solid #393939;border-radius:3px"></div>
<div class="abs" style="left:25px;top:507.8px;color:#e8e8e8;font-size:10.5px;line-height:13px">V</div>
<div class="abs" style="left:16px;top:754px;width:14px;height:14px;background:#676767;border-radius:2px"></div>
<svg class="abs" style="left:19.5px;top:757px" width="6" height="8" viewBox="0 0 6 8"><path d="M0.5 4 L4.8 0.6 V7.4 Z" fill="#e2e2e2"/></svg>
<div class="abs" style="left:32.3px;top:754px;width:30px;height:14px;background:#6b6b6b"></div>
<div class="abs" style="left:58.6px;top:0;width:3px;height:783px;background:#dcdcdc"></div>
</div>
<div class="abs" id="top" style="left:0;top:0;width:1323px;height:24px;background:linear-gradient(#e4e5e6 0,#e4e5e6 15px,#eaebec 19px,#eaebec 24px);overflow:hidden;color:#757575;font-size:14.5px">
<div class="abs" style="left:15px;top:0;width:1.6px;height:16px;background:#ffffff"></div>
<div class="abs" style="left:129px;top:0;width:2px;height:16px;background:#fbfbfb"></div>
<div class="abs" style="left:341px;top:0;width:2px;height:16px;background:#fbfbfb"></div>
<div class="abs" style="left:38px;top:-20px;width:71px;height:30px;border:1px solid #c3c4c5;background:#e6e7e8"></div>
<div class="abs" style="left:66px;top:-10.5px;line-height:16px;color:#666;font-size:14px">65</div>
<svg class="abs" style="left:95px;top:0" width="10" height="4" viewBox="0 0 10 4"><path d="M1.5 0 L5 2.6 L8.5 0 Z" fill="#444"/></svg>
<div class="abs" style="left:171px;top:-8px;line-height:16px;white-space:nowrap;letter-spacing:0.6px">2.26 Mbit/s</div>
<div class="abs" style="left:286px;top:-8px;line-height:16px;white-space:nowrap;letter-spacing:0.5px">5 fps</div>
<div class="abs" style="left:373px;top:-18px;width:27px;height:28px;border:2px solid #1b93d6;border-radius:1.5px;background:#e9edf1"></div>
<svg class="abs" style="left:0;top:0" width="1323" height="24" viewBox="0 0 1323 24">
<g fill="none" stroke="#5a5a5a" stroke-width="4.4"><path d="M423.8 7.2 L433.6 -2 L443.4 7.2"/></g>
<path d="M419.8 1.8 L419.8 10.7 L430.5 10.7 Z M447.4 1.8 L447.4 10.7 L436.7 10.7 Z" fill="#5a5a5a"/>
<rect x="468" y="-4" width="12.8" height="15.2" rx="3.6" fill="#5a5a5a"/><rect x="480.8" y="-4" width="12.8" height="15.2" rx="3.6" fill="#5a5a5a"/>
<path d="M530.6 8.0 L530.2 11.3 L526.2 11.3 L525.8 8.0 L523.2 6.9 L520.6 9.0 L517.7 6.1 L519.8 3.5 L518.7 0.9 L515.4 0.5 L515.4 -3.5 L518.7 -3.9 L519.8 -6.5 L517.7 -9.1 L520.6 -12.0 L523.2 -9.9 L525.8 -11.0 L526.2 -14.3 L530.2 -14.3 L530.6 -11.0 L533.2 -9.9 L535.8 -12.0 L538.7 -9.1 L536.6 -6.5 L537.7 -3.9 L541.0 -3.5 L541.0 0.5 L537.7 0.9 L536.6 3.5 L538.7 6.1 L535.8 9.0 L533.2 6.9 Z" fill="#5a5a5a"/><circle cx="528.2" cy="-1.5" r="6.2" fill="#e4e5e6"/>
<rect x="1279" y="0" width="10" height="2" fill="#6a6a6a"/><rect x="1302" y="0" width="11" height="1.4" fill="#6a6a6a"/>
</svg>
<div class="abs" style="left:470.4px;top:0.2px;font-size:8.6px;line-height:10px;font-weight:bold;color:#f6f6f6;letter-spacing:7.4px;white-space:nowrap">CD</div>
</div>
<svg class="abs" style="left:290px;top:23px" width="90" height="26" viewBox="0 0 90 26"><path d="M3 0 H87 L64 24.3 H27 Z" fill="#eaebec"/><path d="M44.5 6 L53.5 15 H35.5 Z" fill="#7b7b7b"/></svg>

</body></html>
